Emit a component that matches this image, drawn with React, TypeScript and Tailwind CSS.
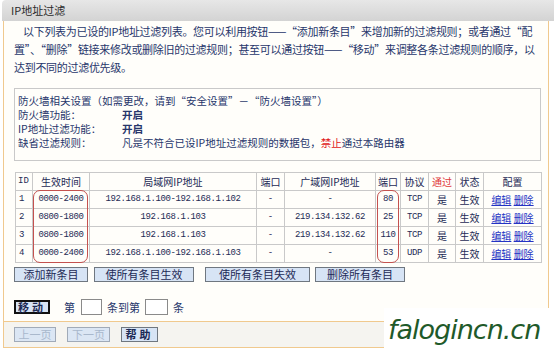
const CJK = "font-['Noto_Sans_CJK_SC',sans-serif]";
const MONO = "font-['Liberation_Mono','Noto_Sans_CJK_SC',monospace]";

type Rule = { id: number; time: string; lan: string; lport: string; wan: string; wport: string; proto: string };

const rules: Rule[] = [
  { id: 1, time: '0000-2400', lan: '192.168.1.100-192.168.1.102', lport: '-', wan: '-', wport: '80', proto: 'TCP' },
  { id: 2, time: '0800-1800', lan: '192.168.1.103', lport: '-', wan: '219.134.132.62', wport: '25', proto: 'TCP' },
  { id: 3, time: '0800-1800', lan: '192.168.1.103', lport: '-', wan: '219.134.132.62', wport: '110', proto: 'TCP' },
  { id: 4, time: '0000-2400', lan: '192.168.1.100-192.168.1.103', lport: '-', wan: '-', wport: '53', proto: 'UDP' },
];

const cell = 'border border-[#c9c9c9] h-[18px] p-0 text-center align-middle';

function Btn({ children, className = '' }: { children: React.ReactNode; className?: string }) {
  return (
    <button
      className={`h-[15px] border border-[#6f7780] bg-[#d7e4f5] text-[11px] leading-[13px] text-[#1d2a55] ${CJK} ${className}`}
    >
      {children}
    </button>
  );
}

export default function App() {
  return (
    <div className={`w-[554px] h-[349px] overflow-hidden bg-white relative ${CJK}`}>
      {/* title bar */}
      <div className="h-[21px] ml-[2px] rounded-tl-[4px] bg-gradient-to-b from-[#e7e7e7] to-[#d3d3d3] pl-[9px] text-[11px] leading-[21px] text-[#2b2b2b]">
        IP地址过滤
      </div>

      <div className="ml-[3px] w-[546px] border-l border-r border-[#f0c98e] bg-[#fffefa]">
        {/* intro */}
        <div className="pl-[10px] pt-[1px] text-[11px] leading-[18px] tracking-[-0.3px] text-[#27366b] whitespace-nowrap">
          <div className="pl-[9px]">
            以下列表为已设的IP地址过滤列表。您可以利用按钮——“添加新条目”来增加新的过滤规则；或者通过“配
          </div>
          <div>置”、“删除”链接来修改或删除旧的过滤规则；甚至可以通过按钮——“移动”来调整各条过滤规则的顺序，以</div>
          <div>达到不同的过滤优先级。</div>
        </div>

        {/* firewall settings */}
        <div className="ml-[10px] mt-[12px] w-[527px] h-[73px] border border-[#c9c9c9] pt-[5px] pl-[3px] text-[10.5px] leading-[14px] text-[#27366b] whitespace-nowrap">
          <div className="h-[14px]">防火墙相关设置（如需更改，请到“安全设置”－“防火墙设置”）</div>
          <div className="flex h-[14px]">
            <span className="w-[104px]">防火墙功能：</span>
            <span className="font-bold">开启</span>
          </div>
          <div className="flex h-[14px]">
            <span className="w-[104px]">IP地址过滤功能：</span>
            <span className="font-bold">开启</span>
          </div>
          <div className="flex h-[14px]">
            <span className="w-[104px]">缺省过滤规则：</span>
            <span>
              凡是不符合已设IP地址过滤规则的数据包，<span className="text-[#e02020]">禁止</span>通过本路由器
            </span>
          </div>
        </div>

        {/* rule table */}
        <div className="relative ml-[11px] mt-[11px] w-[526px]">
          <table className="w-[526px] table-fixed border-collapse text-[10px] text-[#1d2a55]">
            <colgroup>
              <col className="w-[17px]" />
              <col className="w-[57px]" />
              <col className="w-[167px]" />
              <col className="w-[28px]" />
              <col className="w-[91px]" />
              <col className="w-[25px]" />
              <col className="w-[28px]" />
              <col className="w-[27px]" />
              <col className="w-[28px]" />
              <col className="w-[58px]" />
            </colgroup>
            <thead>
              <tr>
                <th className={`${cell} font-normal text-left pl-[2px] ${MONO} text-[9px]`}>ID</th>
                <th className={`${cell} font-normal`}>生效时间</th>
                <th className={`${cell} font-normal`}>局域网IP地址</th>
                <th className={`${cell} font-normal`}>端口</th>
                <th className={`${cell} font-normal`}>广域网IP地址</th>
                <th className={`${cell} font-normal`}>端口</th>
                <th className={`${cell} font-normal`}>协议</th>
                <th className={`${cell} font-normal text-[#e03a3a]`}>通过</th>
                <th className={`${cell} font-normal`}>状态</th>
                <th className={`${cell} font-normal`}>配置</th>
              </tr>
            </thead>
            <tbody>
              {rules.map((r) => (
                <tr key={r.id}>
                  <td className={`${cell} text-left pl-[3px] ${MONO} text-[9px]`}>{r.id}</td>
                  <td className={`${cell} ${MONO} text-[9px] tracking-[-0.4px]`}>{r.time}</td>
                  <td className={`${cell} ${MONO} text-[9px] tracking-[-0.4px]`}>{r.lan}</td>
                  <td className={`${cell} ${MONO} text-[9px]`}>{r.lport}</td>
                  <td className={`${cell} ${MONO} text-[9px] tracking-[-0.4px]`}>{r.wan}</td>
                  <td className={`${cell} ${MONO} text-[9px] tracking-[-0.4px]`}>{r.wport}</td>
                  <td className={`${cell} ${MONO} text-[9px] tracking-[-0.4px]`}>{r.proto}</td>
                  <td className={cell}>是</td>
                  <td className={cell}>生效</td>
                  <td className={`${cell} text-[#2433c4]`}>
                    <span className="underline">编辑</span> <span className="underline">删除</span>
                  </td>
                </tr>
              ))}
            </tbody>
          </table>
          {/* highlight marks */}
          <div className="absolute left-[18px] top-[18px] w-[55px] h-[73px] rounded-[7px] border-[1.5px] border-[#c4514f]" />
          <div className="absolute left-[362px] top-[18px] w-[22px] h-[73px] rounded-[7px] border-[1.5px] border-[#c4514f]" />
        </div>

        {/* action buttons */}
        <div className="flex items-center ml-[10px] mt-[4px] h-[15px]">
          <Btn className="w-[74px]">添加新条目</Btn>
          <Btn className="w-[100px] ml-[6px]">使所有条目生效</Btn>
          <Btn className="w-[105px] ml-[11px]">使所有条目失效</Btn>
          <Btn className="w-[90px] ml-[5px]">删除所有条目</Btn>
        </div>

        {/* move row */}
        <div className="flex items-center ml-[10px] mt-[17px] h-[16px] text-[11px] text-[#27366b]">
          <button className="w-[36px] h-[14px] border-2 border-[#111] bg-[#d7e4f5] text-[11px] leading-[10px] font-bold text-[#1d2a55] tracking-[3px]">
            移动
          </button>
          <span className="ml-[14px]">第</span>
          <span className="ml-[6px] w-[21px] h-[16px] border border-[#8a8a8a] bg-white" />
          <span className="ml-[5px]">条到第</span>
          <span className="ml-[5px] w-[23px] h-[16px] border border-[#8a8a8a] bg-white" />
          <span className="ml-[5px]">条</span>
        </div>

        {/* pager */}
        <div className="mt-[6px] h-[27px] border-t border-b border-[#f0c98e] bg-[#f5f4f0] flex items-center pl-[10px]">
          <Btn className="w-[42px] text-[#a9b8cc] border-[#a0aab8] bg-[#dbe6f4]">上一页</Btn>
          <Btn className="w-[43px] ml-[11px] text-[#a9b8cc] border-[#a0aab8] bg-[#dbe6f4]">下一页</Btn>
          <Btn className="w-[37px] ml-[11px] tracking-[3px] font-bold">帮助</Btn>
        </div>
      </div>

      {/* watermark */}
      <div className="absolute left-[384px] top-[308px] w-[170px] h-[41px] bg-white flex items-end pl-[4px]">
        <span className="font-['DejaVu_Sans',cursive] italic font-light text-[27px] leading-[38px] text-[#1f5a2a] tracking-[-1px] whitespace-nowrap">
          falogincn.cn
        </span>
      </div>
    </div>
  );
}
